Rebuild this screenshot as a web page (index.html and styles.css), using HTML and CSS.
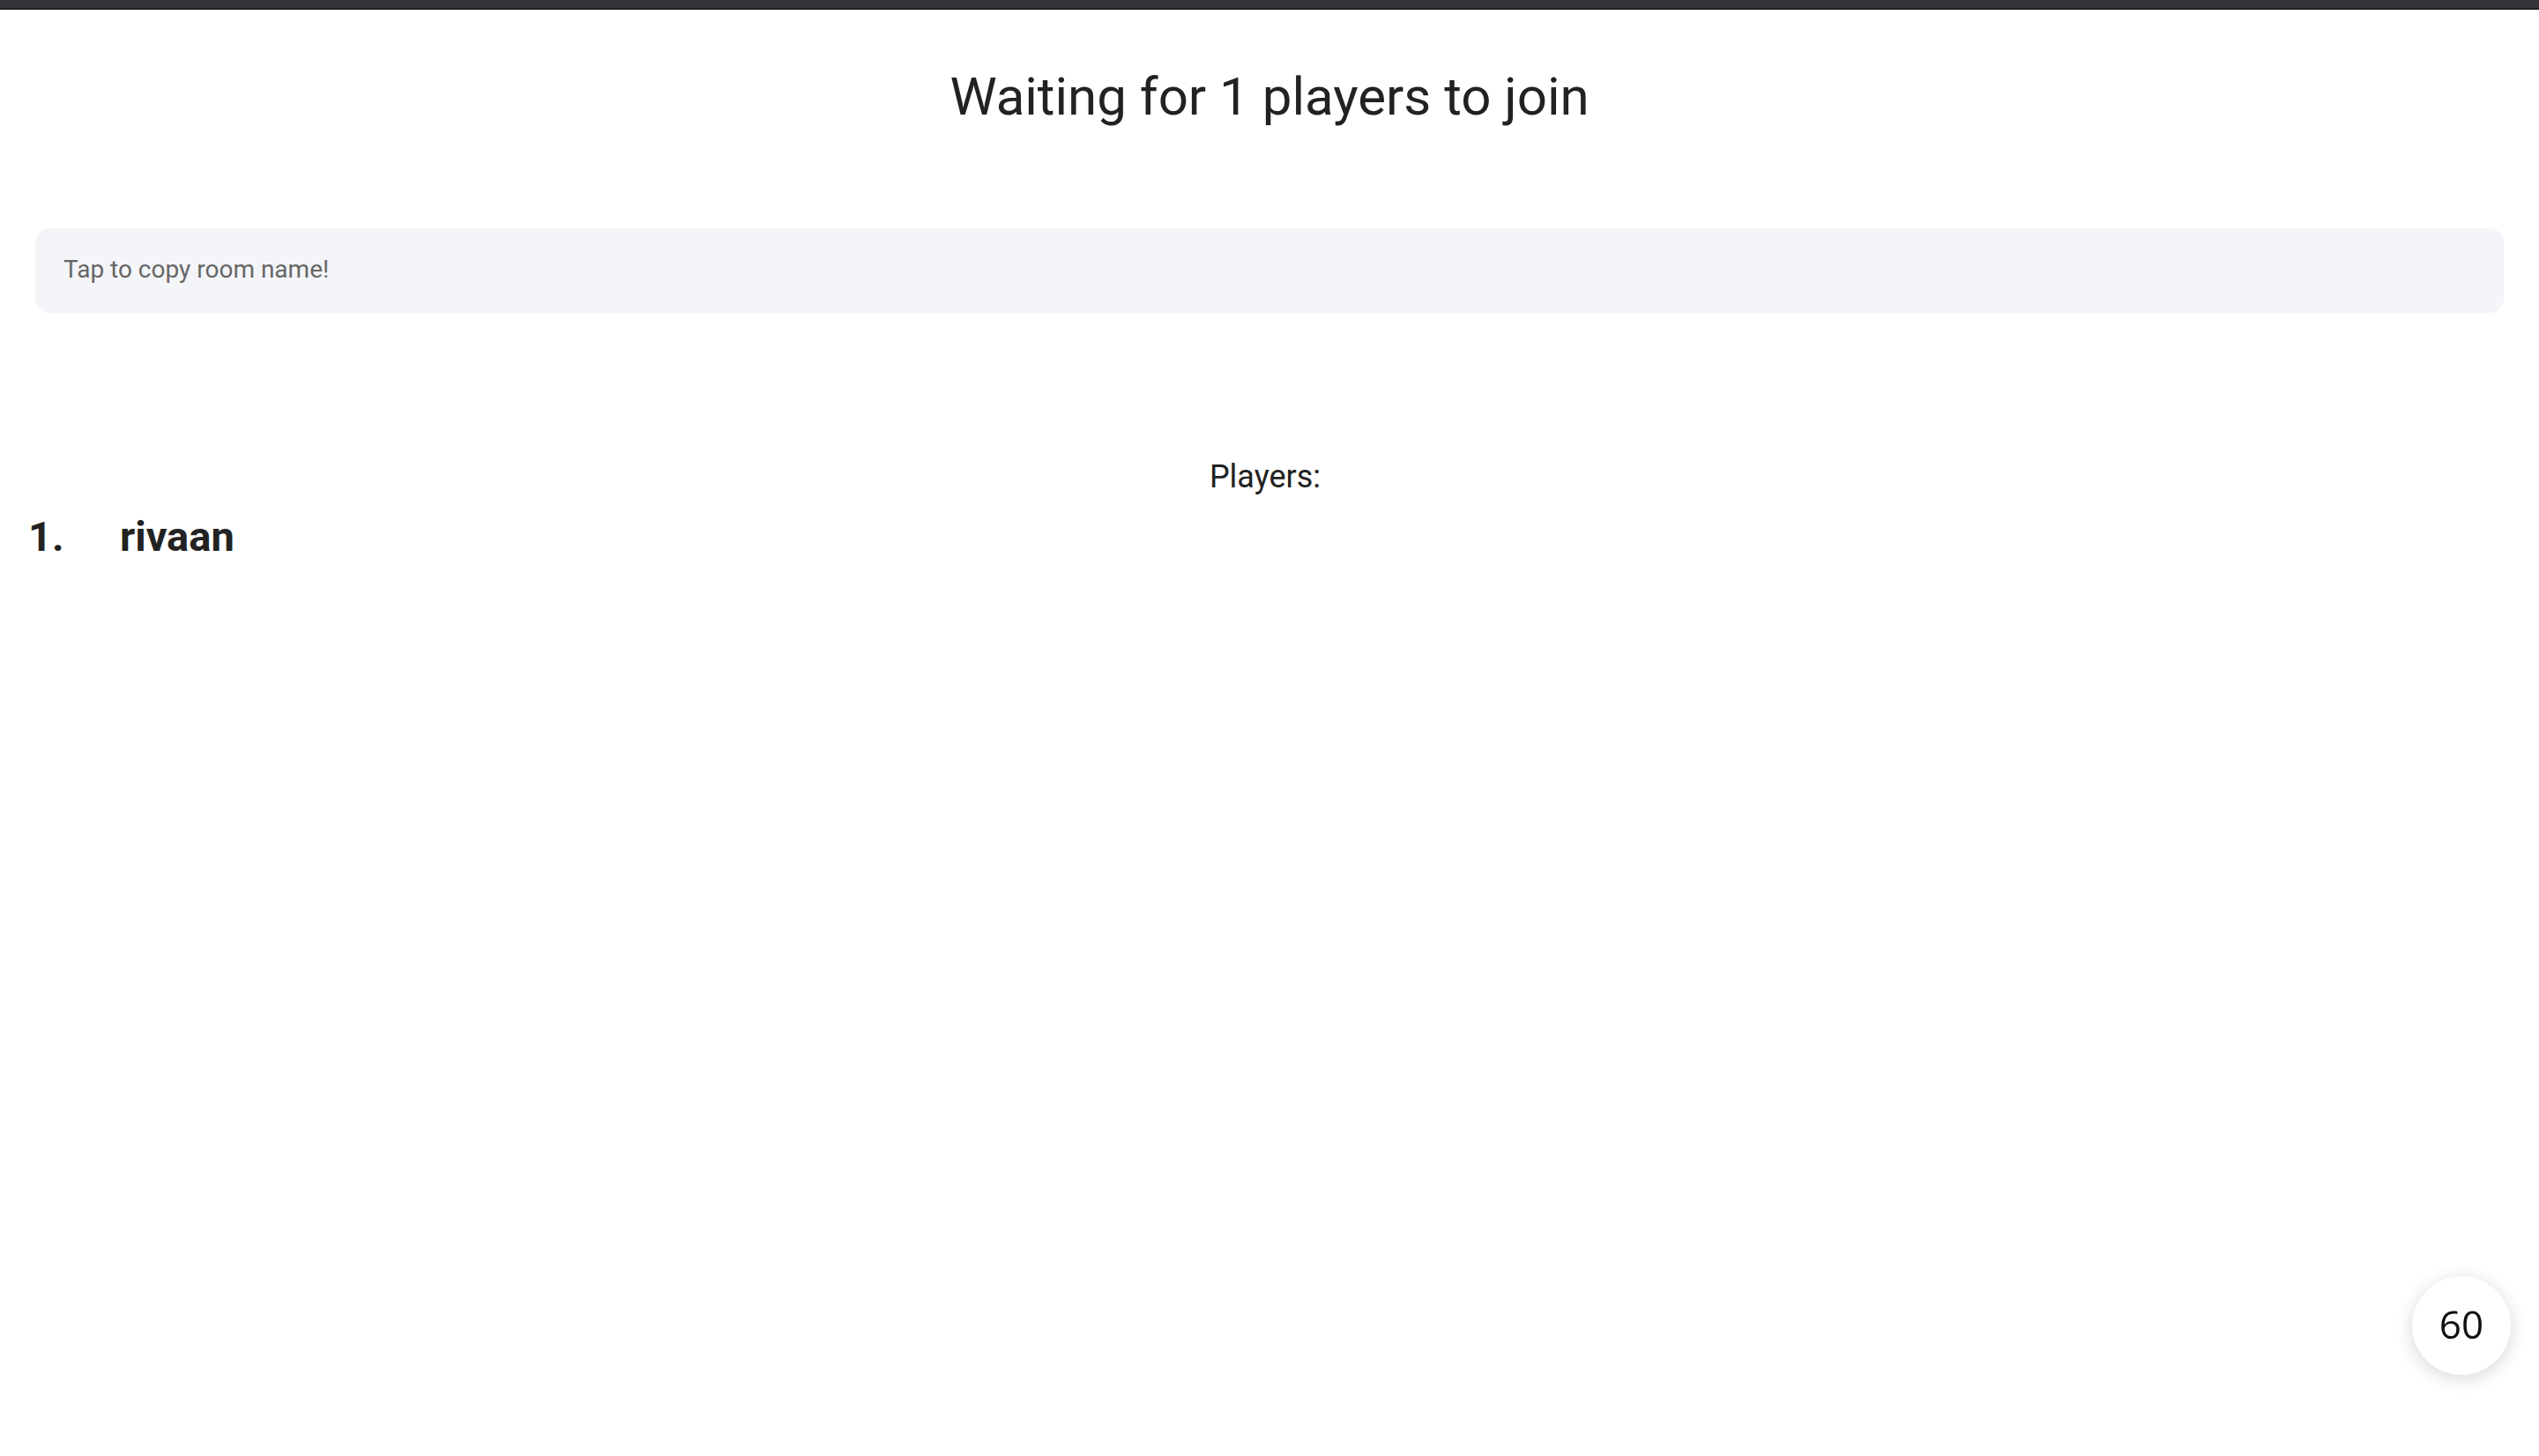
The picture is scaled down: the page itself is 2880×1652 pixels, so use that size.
FILE: index.html
```html
<!DOCTYPE html>
<html lang="en">
<head>
<meta charset="utf-8">
<title>Waiting room</title>
<link rel="stylesheet" href="styles.css">
</head>
<body>
<div class="topbar"></div>
<main class="page">
  <h1 class="title">Waiting for 1 players to join</h1>
  <div class="room-box">Tap to copy room name!</div>
  <section class="players">
    <div class="players-label">Players:</div>
    <ol class="player-list">
      <li class="player"><span class="player-num">1.</span><span class="player-name">rivaan</span></li>
    </ol>
  </section>
</main>
<div class="timer">60</div>
</body>
</html>
```
FILE: styles.css
```css
* { box-sizing: border-box; }
html, body { margin: 0; padding: 0; background: #fff; }
body {
  font-family: Roboto, "Liberation Sans", Arial, sans-serif;
  color: #222;
  width: 2880px;
  height: 1652px;
  overflow: hidden;
}
.topbar {
  height: 11px;
  background: #333438;
  border-bottom: 2px solid #1e1e1f;
}
.page {
  display: flex;
  flex-direction: column;
}
.title {
  margin: 64px 0 0 0;
  font-size: 60px;
  line-height: 70px;
  font-weight: 400;
  text-align: center;
  color: #222;
}
.room-box {
  margin: 114px 40px 0 40px;
  height: 96px;
  background: #f4f5f8;
  border-radius: 16px;
  display: flex;
  align-items: center;
  padding-left: 32px;
  padding-bottom: 4px;
  font-size: 28px;
  color: #666;
}
.players {
  margin-top: 165px;
  display: flex;
  flex-direction: column;
}
.players-label {
  font-size: 36px;
  line-height: 42px;
  text-align: center;
  padding-right: 10px;
  color: #222;
}
.player-list {
  list-style: none;
  margin: 20px 0 0 0;
  padding: 0 0 0 32px;
}
.player {
  display: flex;
  font-size: 47px;
  line-height: 54px;
  font-weight: 700;
  color: #222;
}
.player-num {
  width: 104px;
}
.timer {
  position: fixed;
  right: 32px;
  bottom: 92px;
  width: 112px;
  height: 112px;
  border-radius: 50%;
  background: #fff;
  box-shadow: 0 4px 20px rgba(0, 0, 0, 0.16);
  display: flex;
  align-items: center;
  justify-content: center;
  padding-bottom: 5px;
  font-family: "Open Sans", "Noto Sans", sans-serif;
  font-size: 44px;
  color: #111;
}
```
